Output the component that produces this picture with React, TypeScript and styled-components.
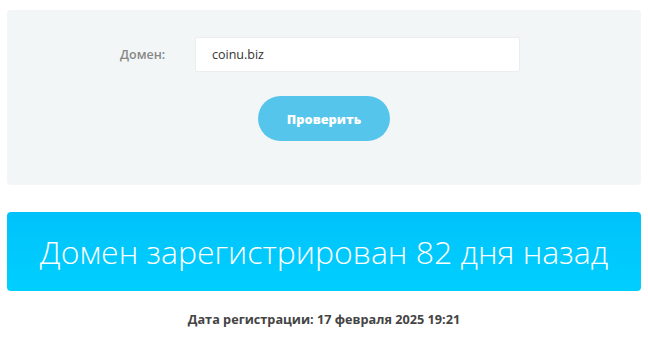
import styled, { createGlobalStyle } from "styled-components";

const GlobalStyle = createGlobalStyle`
  body {
    margin: 0;
    background: #fff;
    font-family: "Open Sans", "Liberation Sans", sans-serif;
  }
`;

const Page = styled.div`
  display: flex;
  flex-direction: column;
  padding: 10px 7px 0 7px;
  width: 648px;
  box-sizing: border-box;
`;

const Panel = styled.form`
  display: flex;
  flex-direction: column;
  align-items: center;
  height: 175px;
  box-sizing: border-box;
  padding-top: 27px;
  background-color: #f3f6f7;
  border-radius: 4px;
`;

const Row = styled.div`
  display: flex;
  align-items: center;
  margin-right: 8px;
`;

const Label = styled.label`
  width: 75px;
  font-size: 12.5px;
  font-weight: 600;
  color: #888;
`;

const Input = styled.input`
  width: 325px;
  height: 35px;
  box-sizing: border-box;
  padding: 0 0 0 16px;
  border: 1px solid #eaeeef;
  border-radius: 2px;
  background: #fff;
  font-family: "Open Sans", sans-serif;
  font-size: 12.5px;
  color: #333;
  outline: none;
`;

const Button = styled.button`
  margin-top: 24px;
  width: 132px;
  height: 45px;
  border: none;
  border-radius: 23px;
  background-color: #55c5ec;
  color: #fff;
  font-family: "Open Sans", sans-serif;
  font-weight: 800;
  font-size: 12.8px;
  cursor: pointer;
`;

const Banner = styled.div`
  margin-top: 27px;
  height: 79px;
  display: flex;
  align-items: center;
  justify-content: center;
  border-radius: 4px;
  background: linear-gradient(#00c2fb, #00cffe);
  color: #fff;
  font-family: "Open Sans", sans-serif;
  font-weight: 300;
  font-size: 32px;
`;

const DateLine = styled.div`
  margin-top: 19px;
  text-align: center;
  font-size: 12.7px;
  font-weight: 700;
  color: #444;
`;

export default function App() {
  return (
    <>
      <GlobalStyle />
      <Page>
        <Panel onSubmit={(e) => e.preventDefault()}>
          <Row>
            <Label>Домен:</Label>
            <Input type="text" defaultValue="coinu.biz" />
          </Row>
          <Button type="submit">Проверить</Button>
        </Panel>
        <Banner>Домен зарегистрирован 82 дня назад</Banner>
        <DateLine>Дата регистрации: 17 февраля 2025 19:21</DateLine>
      </Page>
    </>
  );
}
